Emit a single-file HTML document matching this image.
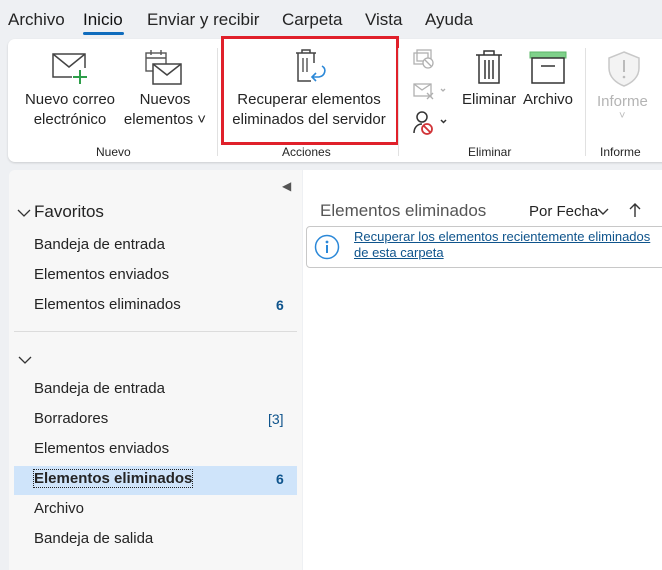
<!DOCTYPE html>
<html><head><meta charset="utf-8"><style>
body{margin:0;width:662px;height:564px;background:#eef0f3;font-family:"Liberation Sans",sans-serif;color:#242424;position:relative;overflow:hidden}
.a{position:absolute;white-space:nowrap}
.tab{font-size:17px;top:10px}
.rib{position:absolute;left:8px;top:39px;width:670px;height:123px;background:#fff;border-radius:7px;box-shadow:0 1px 2px rgba(0,0,0,.15)}
.lbl{font-size:15px;text-align:center;line-height:20px}
.gl{font-size:12px;top:145px}
.sep{position:absolute;top:48px;width:1px;height:108px;background:#e1e1e1}
.nav{position:absolute;left:9px;top:170px;width:293px;height:400px;background:#f7f7f7;border-radius:6px 0 0 0}
.it{font-size:15px;left:34px}
.cnt{font-size:14px;color:#0f548c;font-weight:bold;left:276px}
</style></head><body>
<div class="a tab" style="left:8px">Archivo</div>
<div class="a tab" style="left:83px;color:#111">Inicio</div>
<div style="position:absolute;left:83px;top:32px;width:41px;height:3px;background:#0f6cbd;border-radius:2px"></div>
<div class="a tab" style="left:147px">Enviar y recibir</div>
<div class="a tab" style="left:282px">Carpeta</div>
<div class="a tab" style="left:365px">Vista</div>
<div class="a tab" style="left:425px">Ayuda</div>

<div class="rib"></div>
<svg class="a" style="left:50px;top:50px" width="42" height="38" viewBox="0 0 42 38"><rect x="3" y="4" width="32" height="23" fill="none" stroke="#444" stroke-width="1.5"/><path d="M3 4 L19 17 L35 4" fill="none" stroke="#444" stroke-width="1.5"/><rect x="22" y="18" width="16" height="16" fill="#fff"/><path d="M30 20v14M23 27h14" stroke="#2e9e4a" stroke-width="2"/></svg>
<div class="a lbl" style="left:20px;top:90px;width:100px">Nuevo correo<br>electrónico</div>
<svg class="a" style="left:144px;top:48px" width="40" height="40" viewBox="0 0 40 40"><rect x="2" y="5" width="20" height="18" fill="none" stroke="#555" stroke-width="1.4"/><path d="M2 10h20M7 2v5M17 2v5" stroke="#555" stroke-width="1.4"/><rect x="9" y="16" width="28" height="20" fill="#fff" stroke="#444" stroke-width="1.5"/><path d="M9 16 L23 27 L37 16" fill="none" stroke="#444" stroke-width="1.5"/></svg>
<div class="a lbl" style="left:118px;top:90px;width:94px">Nuevos<br>elementos ˅</div>
<div class="a gl" style="left:96px">Nuevo</div>
<div class="sep" style="left:217px"></div>
<svg class="a" style="left:292px;top:48px" width="40" height="38" viewBox="0 0 40 38"><path d="M4 5h20M10 5V2h8v3" fill="none" stroke="#444" stroke-width="1.5"/><path d="M6 5v28h13" fill="none" stroke="#444" stroke-width="1.5"/><path d="M22 5v10" stroke="#444" stroke-width="1.5"/><path d="M11 10v14M15 10v14" stroke="#444" stroke-width="1.3"/><path d="M30 18c5 3 3 10-3 11l-6 0M24 25l-4 4 4 4" fill="none" stroke="#2b88d8" stroke-width="1.6"/></svg>
<div class="a lbl" style="left:222px;top:90px;width:174px">Recuperar elementos<br>eliminados del servidor</div>
<div class="a gl" style="left:282px">Acciones</div>
<div style="position:absolute;left:221px;top:36px;width:172px;height:103px;border:3px solid #e0202a"></div>
<div class="sep" style="left:398px"></div>
<svg class="a" style="left:412px;top:48px" width="40" height="90" viewBox="0 0 40 90"><g stroke="#b0b0b0" fill="none" stroke-width="1.3"><rect x="2" y="5" width="14" height="11"/><rect x="5" y="2" width="14" height="11"/><circle cx="16" cy="15" r="5" fill="#fff"/><path d="M13 12l6 6"/><rect x="2" y="36" width="17" height="12"/><path d="M2 36l8 6 9-6M15 45l6 6M21 45l-6 6"/><path d="M29 41l2 2 2-2"/></g><g fill="none" stroke-width="1.5"><circle cx="10" cy="69" r="5" stroke="#333"/><path d="M2 85c0-6 4-9 8-9" stroke="#333"/><circle cx="15" cy="81" r="5" stroke="#d13438" fill="#fff" stroke-width="1.8"/><path d="M12 78l6 6" stroke="#d13438" stroke-width="1.8"/><path d="M29 72l2.5 2.5 2.5-2.5" stroke="#333"/></g></svg>
<svg class="a" style="left:474px;top:49px" width="30" height="36" viewBox="0 0 30 36"><path d="M2 6h26M10 6V2h10v4M5 6v28h20V6M11 11v19M15 11v19M19 11v19" fill="none" stroke="#333" stroke-width="1.5"/></svg>
<div class="a lbl" style="left:462px;top:90px">Eliminar</div>
<svg class="a" style="left:529px;top:51px" width="38" height="34" viewBox="0 0 38 34"><rect x="1" y="1" width="36" height="6" fill="#7fd18a" stroke="#5cb86a"/><rect x="3" y="7" width="32" height="25" fill="none" stroke="#333" stroke-width="1.5"/><path d="M12 15h14" stroke="#333" stroke-width="1.5"/></svg>
<div class="a lbl" style="left:523px;top:90px">Archivo</div>
<div class="a gl" style="left:468px">Eliminar</div>
<div class="sep" style="left:585px"></div>
<svg class="a" style="left:606px;top:50px" width="36" height="38" viewBox="0 0 36 38"><path d="M18 2l15 6v10c0 9-7 15-15 18C10 33 3 27 3 18V8z" fill="#f3f3f3" stroke="#c8c8c8" stroke-width="1.5"/><path d="M18 10v12" stroke="#bbb" stroke-width="2"/><circle cx="18" cy="27" r="1.3" fill="#bbb"/></svg>
<div class="a lbl" style="left:597px;top:92px;color:#b4b4b4">Informe</div>
<div class="a" style="left:619px;top:110px;color:#bbb;font-size:11px">˅</div>
<div class="a gl" style="left:600px">Informe</div>

<div class="nav"></div>
<div class="a" style="left:282px;top:179px;font-size:12px;color:#555">&#9664;</div>
<svg class="a" style="left:17px;top:208px" width="14" height="10"><path d="M1 2l6 6 6-6" fill="none" stroke="#333" stroke-width="1.3"/></svg>
<div class="a" style="left:34px;top:202px;font-size:17px">Favoritos</div>
<div class="a it" style="top:236px">Bandeja de entrada</div>
<div class="a it" style="top:266px">Elementos enviados</div>
<div class="a it" style="top:296px">Elementos eliminados</div>
<div class="a cnt" style="top:297px">6</div>
<div style="position:absolute;left:14px;top:331px;width:283px;height:1px;background:#dcdcdc"></div>
<svg class="a" style="left:18px;top:355px" width="14" height="10"><path d="M1 2l6 6 6-6" fill="none" stroke="#333" stroke-width="1.3"/></svg>
<div class="a it" style="top:380px">Bandeja de entrada</div>
<div class="a it" style="top:410px">Borradores</div>
<div class="a" style="left:268px;top:411px;font-size:14px;color:#0f548c">[3]</div>
<div class="a it" style="top:440px">Elementos enviados</div>
<div style="position:absolute;left:14px;top:466px;width:283px;height:29px;background:#cfe4fa"></div>
<div class="a it" style="top:470px;font-weight:bold;outline:1px dotted #222">Elementos eliminados</div>
<div class="a cnt" style="top:471px">6</div>
<div class="a it" style="top:500px">Archivo</div>
<div class="a it" style="top:530px">Bandeja de salida</div>

<div style="position:absolute;left:303px;top:170px;width:370px;height:400px;background:#fff"></div>
<div class="a" style="left:320px;top:201px;font-size:17px;color:#555">Elementos eliminados</div>
<div class="a" style="left:529px;top:203px;font-size:15px">Por Fecha</div>
<svg class="a" style="left:597px;top:208px" width="12" height="8"><path d="M1 1l5 5 5-5" fill="none" stroke="#333" stroke-width="1.4"/></svg>
<svg class="a" style="left:628px;top:202px" width="14" height="16"><path d="M7 15V2M2 7l5-5 5 5" fill="none" stroke="#333" stroke-width="1.4"/></svg>
<div style="position:absolute;left:306px;top:226px;width:370px;height:40px;border:1px solid #c8c8c8;border-radius:4px;background:#fff"></div>
<svg class="a" style="left:314px;top:234px" width="26" height="26"><circle cx="13" cy="13" r="11.5" fill="none" stroke="#2b88d8" stroke-width="1.5"/><circle cx="13" cy="8" r="1.4" fill="#2b88d8"/><path d="M13 11v8" stroke="#2b88d8" stroke-width="2"/></svg>
<div class="a" style="left:354px;top:229px;font-size:13px;line-height:16px;color:#0f548c;text-decoration:underline">Recuperar los elementos recientemente eliminados<br>de esta carpeta</div>
</body></html>
